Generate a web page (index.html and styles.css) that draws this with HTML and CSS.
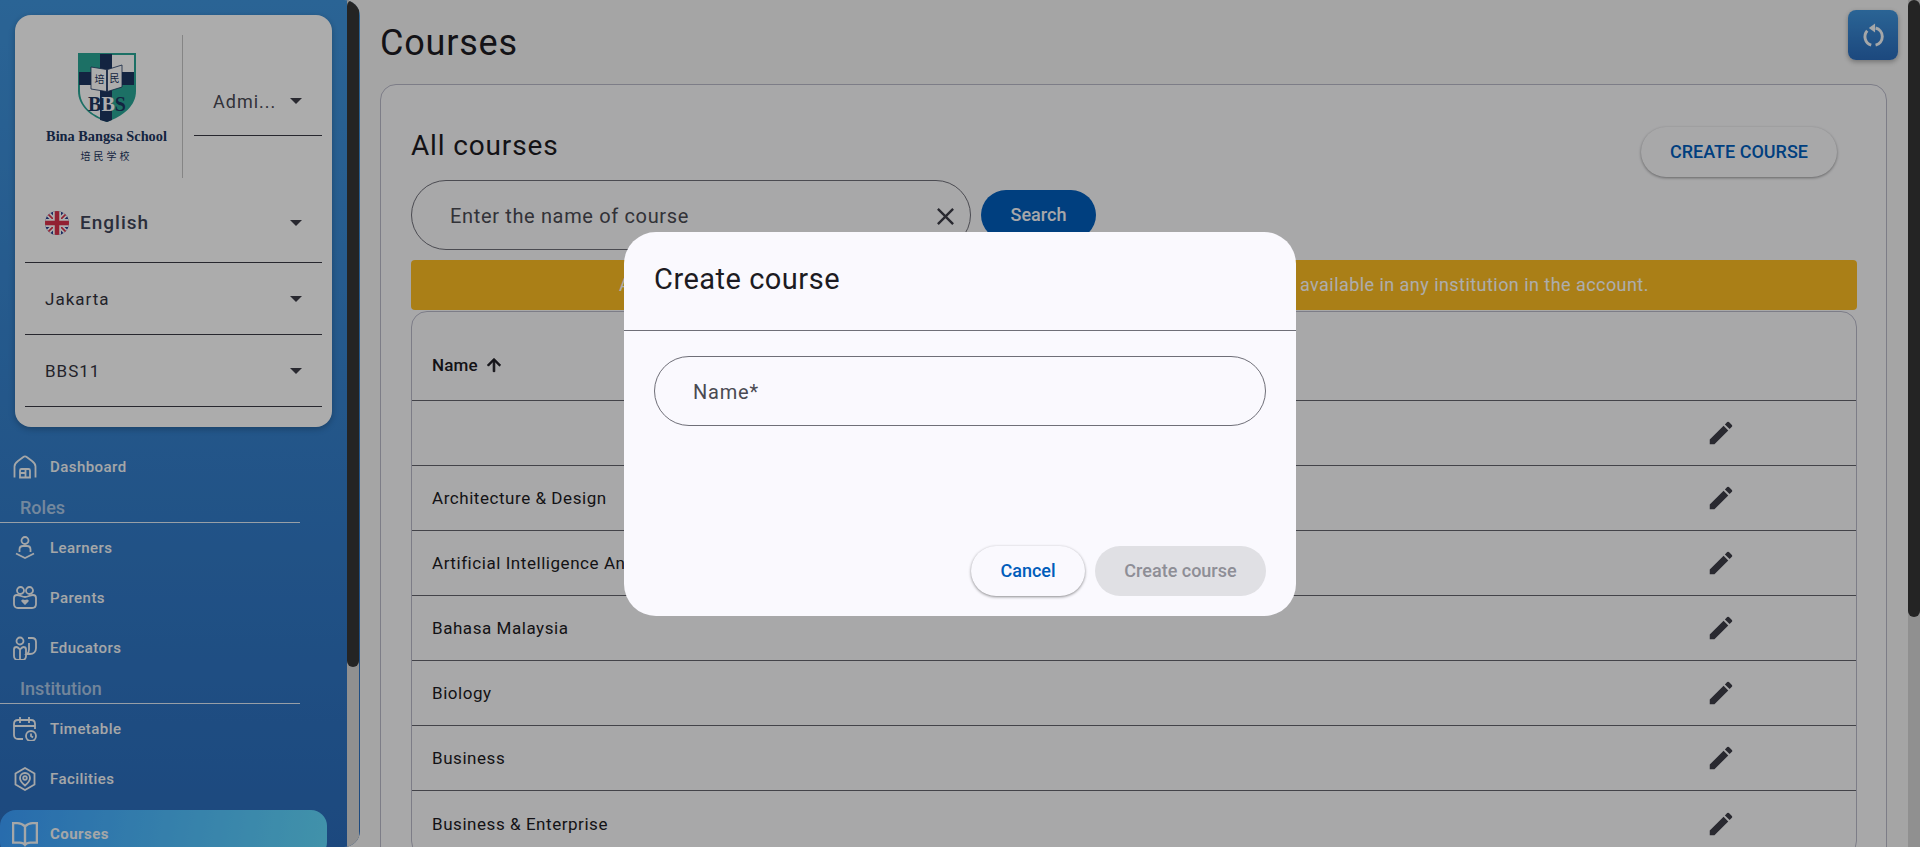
FILE: index.html
```html
<!DOCTYPE html>
<html lang="en">
<head>
    <meta charset="UTF-8">
    <meta name="viewport" content="width=device-width, initial-scale=1.0">
    <title>Courses</title>
    <link rel="stylesheet" href="styles.css">
</head>
<body>
    <svg class="sprite" aria-hidden="true">
        <symbol id="pencil" viewBox="0 0 24 24"><path d="M3 17.25V21h3.75L17.81 9.94l-3.75-3.75L3 17.25zM20.71 7.04a1 1 0 0 0 0-1.41l-2.34-2.34a1 1 0 0 0-1.41 0l-1.83 1.83 3.75 3.75 1.83-1.83z"/></symbol>
    </svg>

    <!-- Sidebar -->
    <aside class="sidebar">
        <div class="sidebar-content">
            <div class="account-card">
                <div class="account-top">
                    <div class="logo">
                        <svg class="shield" viewBox="0 0 60 71">
                            <path d="M1 1h58v38c0 15-13 25-29 31C14 65 1 54 1 39z" fill="#2aa596"/>
                            <path d="M30 3h27v30H30zM3 33h27v35C14 63 3 53 3 39z" fill="#fff"/>
                            <path d="M30 33h27v6c0 14-12 23-27 29z" fill="#2aa596"/>
                            <path d="M23 2h12v18h22v13H35v35l-5 2-7-2V33H2V20h21z" fill="#1c3560"/>
                            <path d="M14 15l15.500 2.500v22L14 37zM45 13l-14.500 4.500v22L45 35z" fill="#fff" stroke="#1c3560" stroke-width=".8"/>
                            <text x="22.500" y="31" class="book-text">培</text>
                            <text x="37.500" y="30" class="book-text">民</text>
                            <text x="30" y="59" class="bbs-text"><tspan>B</tspan><tspan class="bbs-mid">B</tspan><tspan>S</tspan></text>
                        </svg>
                        <div class="logo-name">Bina Bangsa School</div>
                        <div class="logo-cn">培民学校</div>
                    </div>
                    <div class="select select-role">
                        <span>Admi...</span>
                        <i class="caret"></i>
                    </div>
                </div>
                <div class="select select-lang">
                    <svg class="flag" viewBox="0 0 24 24">
                        <defs><clipPath id="flagclip"><circle cx="12" cy="12" r="12"/></clipPath></defs>
                        <g clip-path="url(#flagclip)">
                            <rect width="24" height="24" fill="#2a3f8f"/>
                            <path d="M0 0l24 24M24 0L0 24" stroke="#fff" stroke-width="5"/>
                            <path d="M0 0l24 24M24 0L0 24" stroke="#d8324a" stroke-width="1.600"/>
                            <path d="M12 0v24M0 12h24" stroke="#fff" stroke-width="8"/>
                            <path d="M12 0v24M0 12h24" stroke="#d8324a" stroke-width="4.500"/>
                        </g>
                    </svg>
                    <span class="lang-name">English</span>
                    <i class="caret"></i>
                </div>
                <div class="select">
                    <span>Jakarta</span>
                    <i class="caret"></i>
                </div>
                <div class="select">
                    <span>BBS11</span>
                    <i class="caret"></i>
                </div>
            </div>

            <nav class="menu">
                <a class="menu-item">
                    <svg class="menu-icon" viewBox="0 0 24 24"><path d="M1.500 22.500V11.500C1.500 9 3 7.500 5 6l5-3.800c1.300-1 2.700-1 4 0L19 6c2 1.500 3.500 3 3.500 5.500v11"/><path d="M7 22.500v-7c0-1 .6-1.500 1.500-1.500h7c.9 0 1.500.5 1.500 1.500v7zM12.500 14v8.500M7 18h5.500"/></svg>
                    Dashboard
                </a>
                <div class="menu-section">Roles</div>
                <a class="menu-item">
                    <svg class="menu-icon" viewBox="0 0 24 24"><circle cx="12" cy="4.500" r="3.500"/><path d="M6.500 16v-2.500c0-2 1.300-3.500 3.500-3.500h4c2.200 0 3.500 1.500 3.500 3.500V16"/><path d="M3 17.500l9 4.500 9-4.500"/></svg>
                    Learners
                </a>
                <a class="menu-item">
                    <svg class="menu-icon" viewBox="0 0 24 24"><circle cx="7.500" cy="4.500" r="3.500"/><circle cx="16.500" cy="4.500" r="3.500"/><path d="M1 12c0-2 1-3 3-3 3 0 5 2 8 2s5-2 8-2c2 0 3 1 3 3v6c0 2.500-1.500 4-4 4H5c-2.500 0-4-1.500-4-4z"/><path class="menu-solid" d="M12 19l-3.500-3.500c-1-1.500 1-3 3.500-1.500 2.500-1.500 4.500 0 3.500 1.500z"/></svg>
                    Parents
                </a>
                <a class="menu-item">
                    <svg class="menu-icon" viewBox="0 0 24 24"><circle cx="7" cy="5" r="3.500"/><path d="M1 13.500c0-1.500 1-2.500 2.500-2.500 1.500 0 2.500 1.500 3.500 2.500 1-1 2-2.500 3.500-2.500s2.500 1 2.500 2.500V20c0 2.500-1.500 4-4 4H5c-2.500 0-4-1.500-4-4zM7 13.500V24"/><path d="M15 2h4c2.500 0 4 1.500 4 4v6c0 3.500-2.500 6-6 6h-3c1.500-1 2-2.500 2-4.500V7"/></svg>
                    Educators
                </a>
                <div class="menu-section">Institution</div>
                <a class="menu-item">
                    <svg class="menu-icon" viewBox="0 0 24 24"><path d="M10 22H5c-2.500 0-4-1.500-4-4V7c0-2.500 1.500-4 4-4h13c2.500 0 4 1.500 4 4v5M7 0v6M16 0v6M1 9h21"/><circle cx="18" cy="19" r="5"/><path d="M18 16.500V19l2 1.500"/></svg>
                    Timetable
                </a>
                <a class="menu-item">
                    <svg class="menu-icon" viewBox="0 0 24 24"><path d="M12 1l9.500 5.500v11L12 23l-9.500-5.500v-11z"/><path d="M12 18.500c-3-2.500-5-5-5-7.500a5 5 0 0 1 10 0c0 2.500-2 5-5 7.500z"/><circle cx="12" cy="11" r="1.800"/></svg>
                    Facilities
                </a>
                <a class="menu-item active">
                    <svg class="menu-icon" viewBox="0 0 24 24"><path d="M12 5c-2-2-4-3-7-3H1v18h6c2 0 4 .6 5 2 1-1.400 3-2 5-2h6V2h-4c-3 0-5 1-7 3zM12 5v17"/></svg>
                    Courses
                </a>
            </nav>
        </div>
        <div class="scrollbar"><div class="scrollbar-thumb thumb-side"></div></div>
    </aside>

    <!-- Contenido -->
    <main class="main">
        <h1 class="page-title">Courses</h1>
        <button class="refresh-btn" aria-label="Refresh">
            <svg viewBox="0 0 24 24"><path d="M14 4.800a8.500 8.500 0 0 1 0 16.500M9.800 21.300A8.500 8.500 0 0 1 6 7.500"/><path class="refresh-head" d="M13.500 .5v8.500L7.500 4.800z"/></svg>
        </button>

        <section class="card">
            <div class="card-head">
                <h2>All courses</h2>
                <button class="btn-outline">CREATE COURSE</button>
            </div>
            <div class="search-row">
                <div class="search-box">
                    <span>Enter the name of course</span>
                    <svg class="close-icon" viewBox="0 0 24 24"><path d="M19 6.410L17.590 5 12 10.590 6.410 5 5 6.410 10.590 12 5 17.590 6.410 19 12 13.410 17.590 19 19 17.590 13.410 12z"/></svg>
                </div>
                <button class="btn-search">Search</button>
            </div>
            <div class="warning">All courses are created for the whole account, so each new course added here is available in any institution in the account.</div>

            <div class="table">
                <div class="table-row table-head">
                    <div class="cell-name">Name
                        <svg class="sort-icon" viewBox="0 0 24 24"><path d="M4 12l1.410 1.410L11 7.830V20h2V7.830l5.580 5.590L20 12l-8-8-8 8z"/></svg>
                    </div>
                    <div class="cell-edit"></div>
                </div>
                <div class="table-row"><div class="cell-name"></div><div class="cell-edit"><svg class="edit-icon"><use href="#pencil"/></svg></div></div>
                <div class="table-row"><div class="cell-name">Architecture &amp; Design</div><div class="cell-edit"><svg class="edit-icon"><use href="#pencil"/></svg></div></div>
                <div class="table-row"><div class="cell-name">Artificial Intelligence And Machine Learning</div><div class="cell-edit"><svg class="edit-icon"><use href="#pencil"/></svg></div></div>
                <div class="table-row"><div class="cell-name">Bahasa Malaysia</div><div class="cell-edit"><svg class="edit-icon"><use href="#pencil"/></svg></div></div>
                <div class="table-row"><div class="cell-name">Biology</div><div class="cell-edit"><svg class="edit-icon"><use href="#pencil"/></svg></div></div>
                <div class="table-row"><div class="cell-name">Business</div><div class="cell-edit"><svg class="edit-icon"><use href="#pencil"/></svg></div></div>
                <div class="table-row"><div class="cell-name">Business &amp; Enterprise</div><div class="cell-edit"><svg class="edit-icon"><use href="#pencil"/></svg></div></div>
            </div>
        </section>
    </main>
    <div class="scrollbar scrollbar-page"><div class="scrollbar-thumb thumb-page"></div></div>

    <!-- Dialogo -->
    <div class="overlay">
        <div class="dialog">
            <h3 class="dialog-title">Create course</h3>
            <div class="dialog-body">
                <div class="name-field">Name*</div>
            </div>
            <div class="dialog-actions">
                <button class="btn-cancel">Cancel</button>
                <button class="btn-disabled">Create course</button>
            </div>
        </div>
    </div>
</body>
</html>
```

FILE: styles.css
```css
body {
    font-family: Roboto, 'Liberation Sans', sans-serif;
    margin: 0;
    height: 100vh;
    display: flex;
    overflow: hidden;
    background-color: #f3f3f3;
    color: #1c1b22;
}

button {
    font-family: inherit;
    border: none;
    cursor: pointer;
}

.sprite {
    display: none;
}

/* Barras de scroll */
.scrollbar {
    width: 12px;
    height: 100%;
    flex-shrink: 0;
    background: #d4d4d4;
}

.scrollbar-thumb {
    background: #363636;
    border-radius: 6px;
}

.thumb-side {
    height: 667px;
}

.thumb-page {
    height: 617px;
}

/* Sidebar */
.sidebar {
    width: 360px;
    height: 100vh;
    flex-shrink: 0;
    display: flex;
    overflow: hidden;
    border-radius: 0 16px 16px 0;
    background: linear-gradient(to bottom, #3f94dc, #2a6bba);
}

.sidebar-content {
    width: 347px;
    overflow: hidden;
    flex-shrink: 0;
}

.account-card {
    margin: 15px 15px 0;
    padding: 20px 10px 21px;
    height: 412px;
    box-sizing: border-box;
    background: #fefefe;
    border-radius: 16px;
    box-shadow: 0 2px 6px rgba(0, 0, 0, 0.25);
}

.account-top {
    display: flex;
    height: 143px;
}

.logo {
    width: 158px;
    border-right: 1px solid #c4c4c4;
    display: flex;
    flex-direction: column;
    align-items: center;
    padding: 17px 0 0 6px;
    box-sizing: border-box;
    color: #1c3560;
}

.shield {
    width: 60px;
    height: 71px;
    flex-shrink: 0;
}

.book-text {
    font-family: 'Noto Sans CJK SC', sans-serif;
    font-size: 10px;
    fill: #1c3560;
    text-anchor: middle;
}

.bbs-text {
    font-family: 'Liberation Serif', serif;
    font-size: 20px;
    font-weight: bold;
    fill: #1c3560;
    text-anchor: middle;
}

.bbs-mid {
    fill: #fff;
}

.logo-name {
    font-family: 'Liberation Serif', serif;
    font-weight: bold;
    font-size: 14.300px;
    margin-top: 5px;
    white-space: nowrap;
}

.logo-cn {
    font-family: 'Noto Sans CJK SC', sans-serif;
    font-size: 10px;
    letter-spacing: 3px;
    margin-top: 3px;
}

.select {
    height: 72px;
    box-sizing: border-box;
    display: flex;
    align-items: center;
    justify-content: space-between;
    padding: 0 20px;
    border-bottom: 1px solid #3a3a44;
    font-size: 17px;
    letter-spacing: 1px;
    color: #33333d;
}

.select-role {
    flex: 1;
    height: 67px;
    margin: 34px 0 0 11px;
    padding: 0 20px 2px 19px;
    font-size: 18px;
    color: #4a4a55;
}

.select-lang {
    margin-top: 13px;
    padding-bottom: 8px;
    justify-content: flex-start;
}

.flag {
    width: 24px;
    height: 24px;
    margin-right: 11px;
}

.lang-name {
    font-size: 19px;
    font-weight: 500;
    color: #3f4558;
}

.select-lang .caret {
    margin-left: auto;
}

.caret {
    width: 0;
    height: 0;
    border-left: 6px solid transparent;
    border-right: 6px solid transparent;
    border-top: 6px solid #3d3d47;
}

/* Menu */
.menu {
    margin-top: 15px;
}

.menu-item {
    display: flex;
    align-items: center;
    height: 50px;
    padding-left: 13px;
    font-size: 15px;
    font-weight: 500;
    letter-spacing: 0.45px;
    color: #f4f6f8;
}

.menu-icon {
    width: 24px;
    height: 24px;
    margin-right: 13px;
    fill: none;
    stroke: #f4f6f8;
    stroke-width: 1.800;
}

.menu-solid {
    fill: #f4f6f8;
    stroke: none;
}

.menu-section {
    width: 300px;
    height: 31px;
    box-sizing: border-box;
    padding-top: 5px;
    padding-left: 20px;
    font-size: 18px;
    font-weight: 500;
    color: rgba(255, 255, 255, 0.6);
    border-bottom: 1px solid rgba(255, 255, 255, 0.85);
}

.menu-item.active {
    width: 327px;
    height: 48px;
    margin-top: 6px;
    box-sizing: border-box;
    border-radius: 16px;
    font-weight: 700;
    background: linear-gradient(100deg, #3b9fff, #61d8fb);
}

.menu-item.active .menu-icon {
    stroke-width: 2.200;
    width: 26px;
    height: 26px;
    margin: 0 12px 0 -1px;
}

/* Contenido */
.main {
    flex: 1;
    min-width: 0;
    height: 100vh;
    overflow: hidden;
    box-sizing: border-box;
    padding: 0 21px 0 20px;
    position: relative;
}

.page-title {
    margin: 0;
    height: 84px;
    line-height: 86px;
    font-size: 36px;
    font-weight: 400;
    letter-spacing: 0.8px;
}

.refresh-btn {
    position: absolute;
    top: 10px;
    right: 10px;
    width: 50px;
    height: 50px;
    padding: 0;
    border-radius: 8px;
    background: linear-gradient(to bottom, #3f94dc, #2a6bba);
    box-shadow: 0 2px 5px rgba(0, 0, 0, 0.3);
    display: flex;
    align-items: center;
    justify-content: center;
}

.refresh-btn svg {
    width: 25px;
    height: 25px;
    fill: none;
    stroke: #f4f6f8;
    stroke-width: 2.800;
}

.refresh-btn .refresh-head {
    fill: #f4f6f8;
    stroke: none;
}

.card {
    border: 1px solid #b8b8c8;
    border-radius: 16px;
    padding: 42px 29px 30px 30px;
    background: #f8f8fa;
}

.card-head {
    display: flex;
    justify-content: space-between;
    align-items: center;
    height: 50px;
    padding-right: 20px;
}

.card-head h2 {
    margin: 0 0 14px;
    font-size: 28px;
    font-weight: 400;
    letter-spacing: 0.85px;
}

.btn-outline {
    width: 196px;
    height: 50px;
    padding-bottom: 2px;
    border-radius: 25px;
    background: #f8f8fa;
    color: #005dbb;
    font-size: 18px;
    font-weight: 500;
    box-shadow: 0 1px 3px rgba(0, 0, 0, 0.4);
}

.search-row {
    display: flex;
    align-items: flex-start;
    margin-top: 3px;
}

.search-box {
    width: 560px;
    height: 70px;
    box-sizing: border-box;
    border: 1px solid #6f6f78;
    border-radius: 35px;
    padding: 2px 10px 0 38px;
    display: flex;
    align-items: center;
    justify-content: space-between;
    font-size: 20px;
    letter-spacing: 0.65px;
    color: #4a4a52;
}

.close-icon {
    width: 29px;
    height: 29px;
    fill: #3d3d47;
}

.btn-search {
    margin: 10px 0 0 10px;
    width: 115px;
    height: 50px;
    padding-bottom: 3px;
    border-radius: 25px;
    background: #005dbb;
    color: #f6f6fa;
    font-size: 18px;
    font-weight: 500;
}

.warning {
    margin-top: 10px;
    height: 50px;
    line-height: 49px;
    border-radius: 4px;
    background: #fbbc22;
    color: #fff;
    font-size: 18px;
    letter-spacing: 0.45px;
    text-align: center;
    white-space: nowrap;
}

.table {
    margin-top: 1px;
    border: 1px solid #b8b8c8;
    border-radius: 16px;
}

.table-row {
    display: flex;
    align-items: center;
    height: 65px;
    box-sizing: border-box;
    border-bottom: 1px solid #63636c;
    font-size: 17px;
    letter-spacing: 0.55px;
}

.table-row:last-child {
    border-bottom: none;
}

.table-head {
    height: 89px;
    padding-top: 17px;
    font-weight: 500;
    letter-spacing: 0.15px;
}

.cell-name {
    flex: 1;
    padding-left: 20px;
    display: flex;
    align-items: center;
}

.cell-edit {
    width: 270px;
    display: flex;
    justify-content: center;
}

.sort-icon {
    width: 20px;
    height: 20px;
    margin-left: 6px;
    fill: #1c1b22;
    stroke: #1c1b22;
    stroke-width: 1;
}

.edit-icon {
    width: 30px;
    height: 30px;
    fill: #3d3d47;
}

/* Dialogo */
.overlay {
    position: fixed;
    inset: 0;
    background: rgba(0, 0, 0, 0.32);
    display: flex;
    align-items: center;
    justify-content: center;
}

.dialog {
    width: 672px;
    height: 384px;
    background: #faf9fe;
    border-radius: 32px;
    display: flex;
    flex-direction: column;
}

.dialog-title {
    margin: 0;
    height: 99px;
    box-sizing: border-box;
    padding: 30px 30px 0;
    font-size: 29px;
    font-weight: 400;
    letter-spacing: 0.5px;
    border-bottom: 1px solid #6f6f78;
}

.dialog-body {
    padding: 25px 30px 0;
}

.name-field {
    height: 70px;
    box-sizing: border-box;
    border: 1px solid #6f6f78;
    border-radius: 35px;
    padding: 2px 0 0 38px;
    display: flex;
    align-items: center;
    font-size: 20px;
    letter-spacing: 0.8px;
    color: #4a4a52;
}

.dialog-actions {
    margin-top: auto;
    padding: 0 30px 20px;
    display: flex;
    justify-content: flex-end;
    gap: 10px;
}

.btn-cancel,
.btn-disabled {
    height: 50px;
    border-radius: 25px;
    font-size: 18px;
    font-weight: 500;
}

.btn-cancel {
    width: 114px;
    background: #faf9fe;
    color: #005dbb;
    box-shadow: 0 1px 3px rgba(0, 0, 0, 0.45);
}

.btn-disabled {
    width: 171px;
    background: #e0e0e4;
    color: #8e8e96;
}
```
